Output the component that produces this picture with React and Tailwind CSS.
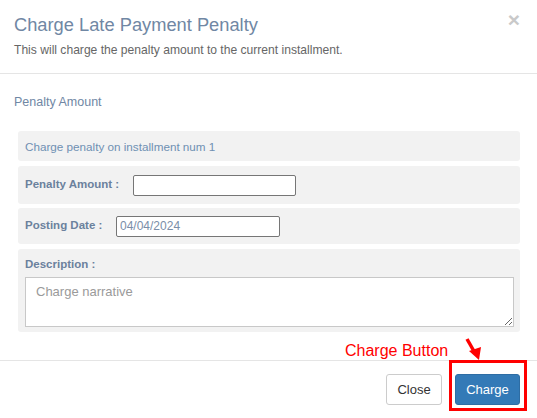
import React from "react";

const Panel = ({ className = "", children }) => (
  <div className={`rounded-[3px] bg-[#f2f2f2] px-[7px] ${className}`}>{children}</div>
);

export default function App() {
  return (
    <div className="relative h-[418px] w-[537px] overflow-hidden bg-white font-['Liberation_Sans',Arial,sans-serif]">
      {/* header */}
      <div className="relative h-[74px] border-b border-[#e5e5e5] px-[14px] pt-[15px]">
        <h4 className="text-[18.3px] leading-[20px] text-[#7087a4]">Charge Late Payment Penalty</h4>
        <p className="mt-[7px] text-[12.1px] leading-[17px] text-[#666]">
          This will charge the penalty amount to the current installment.
        </p>
        <span className="absolute right-[17px] top-[9px] text-[21px] font-bold leading-[21px] text-[#c9c9c9]">×</span>
      </div>

      {/* body */}
      <div className="h-[287px] border-b border-[#e5e5e5] px-[14px] pt-[21px]">
        <div className="text-[12.5px] leading-[14px] text-[#7087a4]">Penalty Amount</div>
        <div className="ml-[4px] mr-[3px] mt-[22px] flex flex-col">
          <Panel className="flex h-[30px] items-center pt-[2px]">
            <span className="text-[11.7px] text-[#6f90b3]">Charge penalty on installment num 1</span>
          </Panel>
          <Panel className="mt-[5px] flex h-[38px] items-center">
            <span className="w-[108px] text-[11.5px] font-bold text-[#6b819d]">Penalty Amount :</span>
            <input className="h-[21px] w-[163px] rounded-[2px] border border-[#767676] bg-white px-[3px] text-[12px]" />
          </Panel>
          <Panel className="mt-[4px] flex h-[36px] items-center">
            <span className="w-[91px] text-[11.5px] font-bold text-[#6b819d]">Posting Date :</span>
            <input
              className="h-[21px] w-[164px] rounded-[2px] border border-[#767676] bg-white px-[3px] text-[12px] text-[#7a8ea8]"
              defaultValue="04/04/2024"
            />
          </Panel>
          <Panel className="mt-[5px] h-[83px] pt-[8px]">
            <div className="text-[11.5px] font-bold leading-[14px] text-[#6b819d]">Description :</div>
            <textarea
              className="mt-[6px] block h-[50px] w-[489px] border border-[#c8c8c8] bg-white px-[10px] py-[4px] text-[13px] placeholder:text-[#9a9a9a]"
              placeholder="Charge narrative"
            />
          </Panel>
        </div>
      </div>

      {/* footer */}
      <div className="flex justify-end gap-[13px] pr-[17px] pt-[13px]">
        <button className="h-[31px] w-[56px] rounded-[3px] border border-[#cccccc] bg-white text-[13px] text-[#333]">
          Close
        </button>
        <button className="h-[31px] w-[65px] rounded-[3px] border border-[#2e6da4] bg-[#337ab7] text-[13px] text-white">
          Charge
        </button>
      </div>

      {/* annotation overlay */}
      <div className="absolute left-[449px] top-[360px] h-[51px] w-[78px] border-[3px] border-[#ff0000]" />
      <span className="absolute left-[345px] top-[342px] text-[16px] leading-[18px] text-[#ff0000]">Charge Button</span>
      <svg className="absolute left-[462px] top-[336px]" width="22" height="26" viewBox="0 0 22 26">
        <line x1="5" y1="3" x2="13" y2="17" stroke="#ff0000" strokeWidth="3.5" />
        <polygon points="7,15 19,11 17,24" fill="#ff0000" />
      </svg>
    </div>
  );
}
